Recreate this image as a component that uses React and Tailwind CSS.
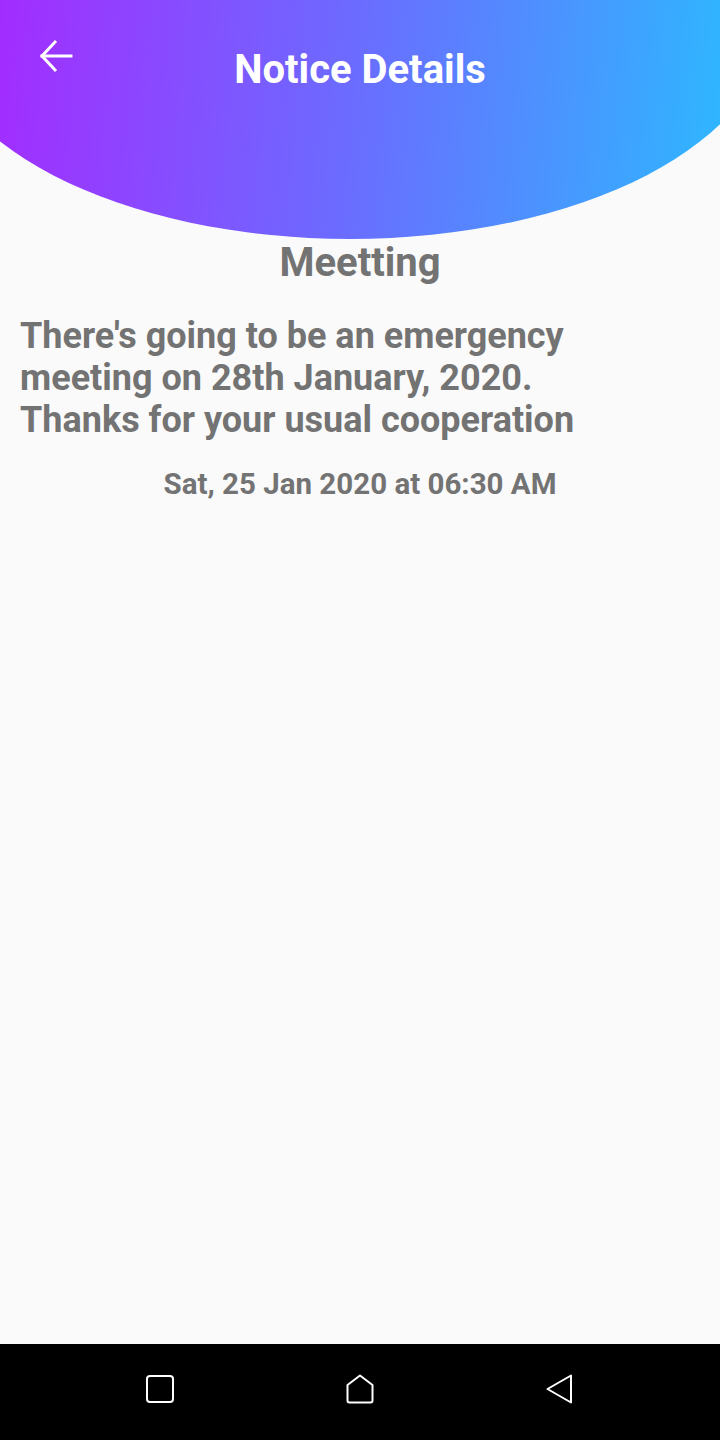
import React from "react";

const notice = {
  title: "Meetting",
  lines: [
    "There's going to be an emergency",
    "meeting on 28th January, 2020.",
    "Thanks for your usual cooperation",
  ],
  date: "Sat, 25 Jan 2020 at 06:30 AM",
};

function BackArrow() {
  return (
    <svg width="34" height="34" viewBox="0 0 34 34" fill="none" stroke="white" strokeWidth="3" strokeLinecap="square">
      <path d="M3 17H32" />
      <path d="M16 3L3 17L16 31" strokeLinejoin="miter" />
    </svg>
  );
}

function NavBar() {
  return (
    <div className="h-[96px] bg-black flex items-center justify-center gap-[172px] pb-[6px]">
      <svg width="28" height="30" viewBox="0 0 28 30" fill="none" stroke="white" strokeWidth="2">
        <rect x="1" y="2" width="26" height="26" rx="3" />
      </svg>
      <svg width="28" height="30" viewBox="0 0 28 30" fill="none" stroke="white" strokeWidth="2" strokeLinejoin="round">
        <path d="M14 1.5L26.5 11V26.5C26.5 27.6 25.8 28.5 24.5 28.5H3.5C2.3 28.5 1.5 27.6 1.5 26.5V11Z" />
      </svg>
      <svg width="28" height="30" viewBox="0 0 28 30" fill="none" stroke="white" strokeWidth="2" strokeLinejoin="round">
        <path d="M25 1.5V28.5L1.5 15Z" />
      </svg>
    </div>
  );
}

export default function App() {
  return (
    <div className="h-[1440px] flex flex-col bg-[#fafafa] font-['Roboto',sans-serif] overflow-hidden">
      {/* curved gradient header */}
      <div className="overflow-hidden">
        <div className="w-[840px] -ml-[70px] h-[239px] pl-[70px] pr-[50px] rounded-bl-[420px_218px] rounded-br-[420px_218px] bg-[linear-gradient(95deg,#a32cff_8%,#6b6cff_50%,#2eb7ff_94%)]">
          <div className="grid grid-cols-[1fr_auto_1fr] items-start pt-[46px]">
            <div className="pl-[39px] -mt-[7px]">
              <BackArrow />
            </div>
            <h1 className="text-[40px] leading-[47px] font-bold text-white">Notice Details</h1>
            <div />
          </div>
        </div>
      </div>

      <div className="flex-1 text-[#737373] font-bold">
        <h2 className="text-center text-[40px] leading-[47px]">{notice.title}</h2>
        <p className="mt-[29px] px-5 text-[36px] leading-[42px]">
          {notice.lines.map((line, i) => (
            <React.Fragment key={i}>
              {line}
              {i < notice.lines.length - 1 && <br />}
            </React.Fragment>
          ))}
        </p>
        <p className="mt-[26px] text-center text-[29.5px] leading-[34px]">{notice.date}</p>
      </div>

      <NavBar />
    </div>
  );
}
